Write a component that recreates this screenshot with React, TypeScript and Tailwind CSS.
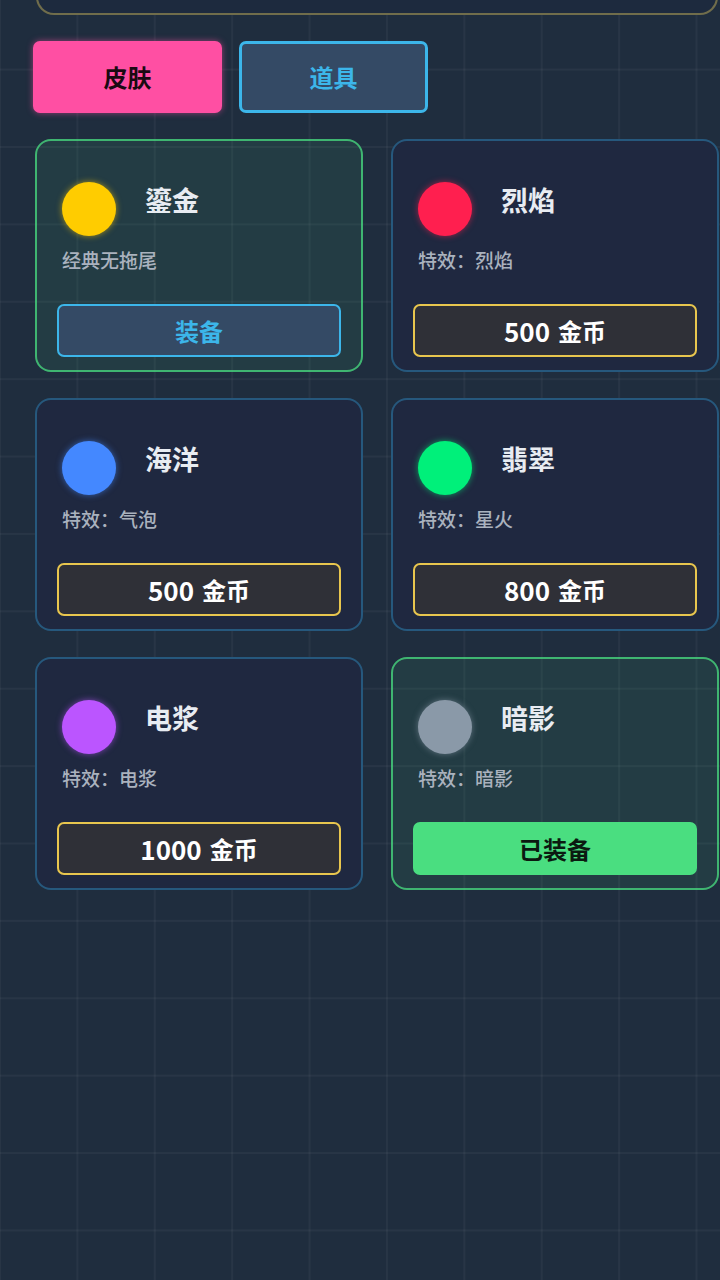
import React from "react";

type Item = {
  name: string;
  desc: string;
  color: string;
  glow: string;
  state: "equip" | "price" | "equipped";
  price?: string;
  highlight: boolean;
};

const items: Item[] = [
  { name: "鎏金", desc: "经典无拖尾", color: "#ffcc00", glow: "rgba(255,204,0,0.6)", state: "equip", highlight: true },
  { name: "烈焰", desc: "特效：烈焰", color: "#ff1f4f", glow: "rgba(255,31,79,0.6)", state: "price", price: "500", highlight: false },
  { name: "海洋", desc: "特效：气泡", color: "#4488ff", glow: "rgba(68,136,255,0.6)", state: "price", price: "500", highlight: false },
  { name: "翡翠", desc: "特效：星火", color: "#00f07a", glow: "rgba(0,240,122,0.6)", state: "price", price: "800", highlight: false },
  { name: "电浆", desc: "特效：电浆", color: "#bb55ff", glow: "rgba(187,85,255,0.6)", state: "price", price: "1000", highlight: false },
  { name: "暗影", desc: "特效：暗影", color: "#8a99a8", glow: "rgba(138,153,168,0.6)", state: "equipped", highlight: true },
];

function Card({ item }: { item: Item }) {
  return (
    <div
      className={
        item.highlight
          ? "rounded-[16px] border-2 border-[rgba(74,222,128,0.75)] bg-[rgba(74,222,128,0.09)] pl-[20px] pr-[20px] pt-[41px] pb-[13px]"
          : "rounded-[16px] border-2 border-[rgba(56,189,248,0.33)] bg-[#1f2840] pl-[20px] pr-[20px] pt-[41px] pb-[13px]"
      }
    >
      <div className="flex items-start pl-[5px]">
        <div
          className="h-[54px] w-[54px] shrink-0 rounded-full"
          style={{ backgroundColor: item.color, boxShadow: `0 0 6px ${item.glow}` }}
        />
        <div className="ml-[29px] text-[27px] leading-[36px] font-bold text-[#e8ecf2]">{item.name}</div>
      </div>
      <div className="mt-[10px] pl-[5px] text-[19px] leading-[28px] font-medium text-[#aab2be]">{item.desc}</div>
      {item.state === "equip" && (
        <div className="mt-[30px] flex h-[53px] items-center justify-center rounded-[7px] border-2 border-[#3cb6ea] bg-[#344a65] text-[24px] font-bold text-[#3cb6ea]">
          装备
        </div>
      )}
      {item.state === "price" && (
        <div className="mt-[30px] flex h-[53px] items-center justify-center gap-[8px] rounded-[7px] border-2 border-[#e8c64e] bg-[#2f3037] font-semibold text-white">
          <span className="text-[26px] leading-none">{item.price}</span>
          <span className="text-[24px] leading-none">金币</span>
        </div>
      )}
      {item.state === "equipped" && (
        <div className="mt-[30px] flex h-[53px] items-center justify-center rounded-[7px] border-2 border-[#4ade80] bg-[#4ade80] text-[24px] font-bold text-[#0b1a10]">
          已装备
        </div>
      )}
    </div>
  );
}

export default function App() {
  return (
    <div className="h-[1280px] w-full overflow-hidden bg-[#1f2d3e] bg-[linear-gradient(to_right,rgba(255,255,255,0.04)_2px,transparent_2px),linear-gradient(to_bottom,rgba(255,255,255,0.04)_2px,transparent_2px)] bg-[size:77.4px_77.4px] bg-[position:-1px_68.6px] font-['Noto_Sans_CJK_SC',sans-serif]">
      <div className="ml-[36px] mr-[2px] -mt-[46px] h-[61px] rounded-[18px] border-2 border-[rgba(214,190,90,0.45)] bg-[#1d2a3e]" />
      <div className="mt-[26px] flex gap-[17px] pl-[33px]">
        <div className="flex h-[72px] w-[189px] items-center justify-center rounded-[7px] bg-[#ff4fa3] text-[24px] font-bold text-[#1a0a12] shadow-[0_0_6px_rgba(255,79,163,0.55)]">
          皮肤
        </div>
        <div className="flex h-[72px] w-[189px] items-center justify-center rounded-[7px] border-[3px] border-[#3cb6ea] bg-[#344a65] text-[24px] font-bold text-[#3cb6ea]">
          道具
        </div>
      </div>
      <div className="mt-[26px] grid grid-cols-[328px_328px] gap-x-[28px] gap-y-[26px] pl-[35px]">
        {items.map((it) => (
          <Card key={it.name} item={it} />
        ))}
      </div>
    </div>
  );
}
